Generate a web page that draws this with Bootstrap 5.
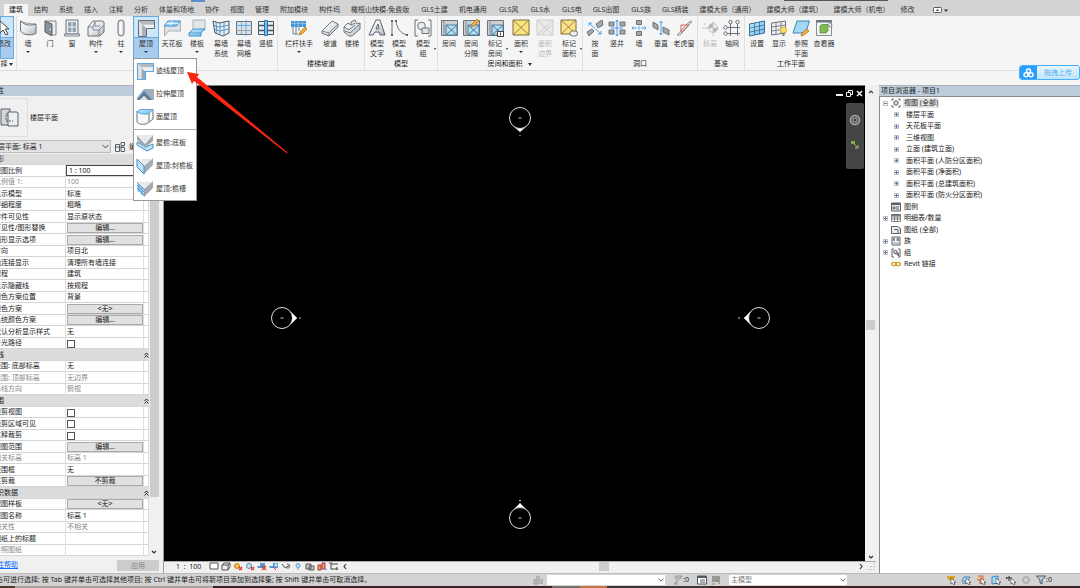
<!DOCTYPE html>
<html lang="zh-CN">
<head>
<meta charset="utf-8">
<meta name="viewport" content="width=device-width, initial-scale=1">
<title>项目1 - 楼层平面: 标高 1</title>
<link href="https://cdn.jsdelivr.net/npm/bootstrap@5.3.0/dist/css/bootstrap.min.css" rel="stylesheet">
<style>
body{font-family:"Noto Sans","Noto Sans CJK SC",sans-serif;font-size:7px;line-height:10px;color:#222;background:#f0f0f0}
button,input,select{font:inherit;color:inherit}
svg{display:block;flex:none}
.app{height:100vh;overflow:hidden}
/* tab strip */
.tabstrip{height:16px;background:#d3d3d3;padding:4px 0 0 4px;gap:1px}
.tabstrip .nav-link{padding:0 5px;height:12px;line-height:12px;color:#333;border:0;border-radius:0;white-space:nowrap}
.tabstrip .nav-link.gls{padding-left:6px}
.tabstrip .nav-link.active{background:#f5f5f5;color:#111}
.mark-blue{left:191px;width:14px;height:2px;background:#5b8fd0}
.mark-dark{left:784px;width:104px;height:1px;background:#555}
/* ribbon */
.ribbon{height:55px;background:#f5f5f5;border-bottom:1px solid #dcdcdc}
.panel{border-right:1px solid #e0e0e0;padding:0 1px}
.panel.flush{padding:0}
.panel.first{padding:0 2px 0 0}
.panel:last-child{border:0}
.panel-title{height:10px;line-height:10px;text-align:center;white-space:nowrap}
.tool{width:22px;height:43px;padding:3px 0 0;border:0;border-radius:0;background:none;display:flex;flex-direction:column;align-items:center;color:#333;line-height:10px;white-space:nowrap;position:relative}
.tool svg{width:18px;height:18px;margin-bottom:2px}
.tool.w24{width:24px}.tool.w26{width:26px}.tool.w40{width:40px}
.tool:disabled{color:#b5b5b5}
.drop::after{content:"";border:2px solid transparent;border-top-color:#333;border-bottom:0;margin-top:2px}
.sidedrop::after{content:"";position:absolute;right:0;top:32px;border:1px solid transparent;border-top:2px solid #333;border-bottom:0}
.tool.on{background:linear-gradient(#cde7f9 0 21px,#6aa9df 21px 22px,#a9cbee 22px);box-shadow:inset 0 0 0 1px #6aa9df}
.tool.half{width:14px;align-items:flex-end;padding-right:3px}
.caret{display:inline-block;border:2px solid transparent;border-top:3px solid #333;border-bottom:0;vertical-align:middle}
.optbar{height:14px;background:#f5f5f5}
.roofmenu{top:58px;left:133px;width:64px;border:1px solid #999;background:#fff;z-index:10}
.roofmenu button{display:flex;align-items:center;gap:2px;width:100%;height:23px;border:0;background:none;padding:0 0 0 2px;white-space:nowrap;color:#333}
.roofmenu svg{width:18px;height:18px}
.roofmenu hr{margin:1px 0;border-color:#aaa;opacity:1}
.pointer-arrow{left:186px;top:71px;z-index:12}
.upload{right:0;top:65px;height:15px;width:61px;border:1px solid #49aefb;border-radius:3px;padding:0;background:linear-gradient(#e8f6ff,#bfe5ff);color:#58b2f2;z-index:11;overflow:hidden}
.upload .ic{width:17px;height:15px;background:#2b9dfb}
/* properties palette */
.palette{width:164px;border-right:1px solid #999;background:#f0f0f0}
.palette-in{margin-left:-10px;min-height:0}
.capbar{height:11px;background:#becddb;line-height:10px;border-top:1px solid #aab4bd}
.typebox{height:43px;gap:2px}
.typebox .thumb{width:38px;height:39px;border:1px solid #ddd;padding:9px 0 0 9px}
.filter{height:15px}
.filter select{height:13px;width:121px;border:1px solid #bbb;border-radius:0;background-color:#e3e3e3;padding:0;font-size:7px;line-height:10px;background-size:7px;background-position:right 1px center}
.props{width:159px;table-layout:fixed;border-collapse:separate;border-spacing:0;background:#fff}
.props tr{height:12px}.props tr:nth-child(odd){height:11px}
.props td,.props th{padding:0 0 0 4px;line-height:10px;font-weight:400;border-right:1px solid #ddd;border-bottom:1px solid #d5d5d5;white-space:nowrap;overflow:hidden}
.props td{padding-left:1px}
.props .grp th,.props .grp td{background:#dcdcdc;border-right:0;padding-left:0}
.props .dim{color:#888}
.props td button{display:block;width:76px;height:10px;line-height:8px;padding:0;border:1px solid #aaa;border-radius:0;background:#e1e1e1;text-align:center}
.props input[type=checkbox]{appearance:none;display:block;width:8px;height:8px;border:1px solid #555;margin:1px 0 0;background:#fff}
.props input[type=text]{display:block;width:100%;height:11px;border:1px solid #444;padding:0 0 0 2px;background:#fff}
.props-wrap{height:402px;overflow:hidden;gap:1px}
.vbar{width:9px;background:#f0f0f0}
.vbar .fill{height:343px;background:#cdcdcd}
.palette .btn-apply{width:42px;height:11px;line-height:10px;padding:0;border:0;background:#ccc;color:#888}
/* drawing area */
.canvas{background:#000;position:relative;border-top:1px solid #777}
.marker{position:absolute;transform:translate(-50%,-50%)}
.winctl{top:3px;right:2px;gap:3px}
.winctl button,.bare{border:0;background:none;padding:0}
.navbox{top:17px;right:1px;width:18px;height:66px;background:#454545;border-radius:2px;padding-top:10px;gap:13px}
.vscroll{width:11px;background:#f0f0f0;padding:3px 0 0}
.thumbv{width:9px;height:10px;background:#cdcdcd}
.viewbar{height:12px;background:#f0f0f0;border-top:1px solid #aaa;line-height:9px}
.viewbar svg{width:10px;height:9px}
.thumbh{width:10px;height:9px;background:#cdcdcd}
/* project browser */
.browser{width:201px;margin-left:3px}
.tree{background:#fff;border-left:1px solid #888;border-top:1px solid #888;padding-left:3px}
.tree ul{list-style:none;margin:0;padding:0}
.tree .node{height:12px;display:flex;align-items:center;white-space:nowrap;gap:3px;color:#222}
.tree .node.s{height:11px}
.tree .kid{padding-left:11px}
.tree .kid .node{gap:0}
.tree .kid span{padding-left:7px}
.tree svg.ico{width:10px;height:10px}
.tree .hot{background:#e6e6e6;padding:0 1px;margin-left:-1px}
/* status bar */
.status{height:13px;background:#d3d3d3;border-top:1px solid #bbb;white-space:nowrap}
.status select{height:10px;font-size:7px;line-height:10px;width:118px;border:0;border-radius:0;padding:0 0 0 2px;background-color:#fff;background-size:6px;background-position:right 1px center;color:#777}
.status svg{width:10px;height:10px}
.hint{width:544px;margin-left:-11px}
.desk{height:2px;background:linear-gradient(90deg,#4a3a30 0 15px,#a9a3a0 15px 213px,#3a2323 213px 552px,#77706c 552px 580px,#c07848 580px 607px,#3a3434 607px 710px,#3a2326 710px)}
</style>
</head>
<body>
<svg width="0" height="0" class="position-absolute" aria-hidden="true">
<defs>
<linearGradient id="g1" x1="0" y1="0" x2="1" y2="1"><stop offset="0" stop-color="#fff"/><stop offset=".5" stop-color="#e6e9ec"/><stop offset="1" stop-color="#a9b0b8"/></linearGradient>
<linearGradient id="g2" x1="0" y1="0" x2="1" y2="1"><stop offset="0" stop-color="#c9e9fb"/><stop offset="1" stop-color="#6fbaea"/></linearGradient>
</defs>
<symbol id="wall" viewBox="0 0 18 18"><path d="M1.500 2l3 2.500c4 2 8 2 12.500.500v9.500c-4 1.800-8 1.700-12 .500l-3.500-3z" fill="url(#g1)" stroke="#6a727b"/><path d="M1.500 2c4 2.200 9 3 15.500 3" fill="none" stroke="#6a727b" stroke-width=".7"/></symbol>
<symbol id="door" viewBox="0 0 18 18"><path d="M4 2h11v14h-3" fill="#eef0f2" stroke="#7d858e"/><path d="M4 2l7 3v12l-7-4z" fill="#8a929b" stroke="#555d66"/><circle cx="9.300" cy="10.500" r=".8" fill="#fff"/></symbol>
<symbol id="window" viewBox="0 0 18 18"><path d="M3 1h12v14H3z" fill="#eef0f2" stroke="#6a727b"/><path d="M5 3h3.500v4.500H5zM9.500 3H13v4.500H9.500zM5 8.500h3.500V13H5zM9.500 8.500H13V13H9.500z" fill="#97a3b0"/><path d="M1.500 15h15v2h-15z" fill="#e2e5e8" stroke="#6a727b" stroke-width=".8"/></symbol>
<symbol id="comp" viewBox="0 0 18 18"><path d="M1 8l5-6h9l2 1v10l-4 4H1z" fill="url(#g1)" stroke="#6a727b"/><path d="M1 8h5l2-5M6 8v3h6v5M12 11l4-4M8 3v4h5" fill="none" stroke="#6a727b" stroke-width=".8"/></symbol>
<symbol id="column" viewBox="0 0 18 18"><rect x="6" y="1" width="6" height="16" rx="3" fill="#dfe2e6" stroke="#6a727b"/><rect x="7.500" y="3" width="2" height="12" rx="1" fill="#fff"/></symbol>
<symbol id="roof" viewBox="0 0 18 18"><path d="M1.500 1.500h16v8h-8v8h-8z" fill="#8b949e"/><path d="M1.500 1.500l4 4v12h-4z" fill="#dfe3e6"/><path d="M1.500 1.500h16v4h-12z" fill="#b3bac2"/><path d="M5.500 5.500l4 4v8h-4z" fill="#a8b0b8"/><path d="M5.500 5.500h12v4h-8z" fill="#f1f3f4"/><path d="M1.500 1.500h16v8h-8v8h-8z" fill="none" stroke="#68717b"/></symbol>
<symbol id="roofb" viewBox="0 0 18 18"><path d="M1.500 1.500l4 4v12h-4z" fill="#dfe3e6"/><path d="M1.500 1.500h16v4h-12z" fill="#b3bac2"/><path d="M5.500 5.500l4 4v8h-4z" fill="#a0a8b1"/><path d="M5.500 5.500h12v4h-8z" fill="#eff1f3"/><path d="M1.500 1.500h16v8h-8v8h-8z" fill="none" stroke="#5aa9e6" stroke-width="1.200"/></symbol>
<symbol id="ceiling" viewBox="0 0 18 18"><path d="M1.500 7v10l4-5h12V2" fill="#dfe3e7" stroke="#9aa1a9" stroke-width=".8"/><path d="M1 7l4-5h12.500l-4 5z" fill="url(#g2)" stroke="#3a90d4"/><path d="M3.500 4.500h12M9.500 2L7 7" stroke="#fff" stroke-width=".7"/></symbol>
<symbol id="floor" viewBox="0 0 18 18"><path d="M5 1h12v10H5z" fill="#e2e5e9" stroke="#9aa1a9" stroke-width=".8"/><path d="M1 14l4.500-4H17l-4 4v3H1z" fill="url(#g2)" stroke="#3a90d4"/><path d="M1 14h12" stroke="#3a90d4" stroke-width=".7"/></symbol>
<symbol id="curtain" viewBox="0 0 18 18"><path d="M1 2l6 2 10-2v12l-6 3-8-3z" fill="#e2f1fa" stroke="#49545f"/><path d="M4 3l1 12M8 4v12M12 3v13M1 6l6 2 10-2M2 10l6 2 9-2" fill="none" stroke="#3f7fb2" stroke-width=".8"/></symbol>
<symbol id="grid" viewBox="0 0 18 18"><path d="M1.500 2.500h15v13h-15z" fill="#dbe1e7" stroke="#6a727b"/><path d="M6.500 3v12M1.500 11.500h15" stroke="#8d969f" stroke-width=".8"/><path d="M11 1v16M1 6.500h16" stroke="#5aaaf0"/></symbol>
<symbol id="mullion" viewBox="0 0 18 18"><path d="M1.500 2.500h15v13h-15z" fill="#e2eef6" stroke="#49545f"/><path d="M1 6.500h16M1 11.500h16" stroke="#49545f" stroke-width="1.300"/><path d="M7.500 1.500h3v15h-3z" fill="#74bbea" stroke="#2c72aa"/></symbol>
<symbol id="rail" viewBox="0 0 18 18"><path d="M1 2h15v6H1z" fill="#4a97d6"/><path d="M1 4.500h15M4.500 2v6M8.500 2v6M12.500 2v6" stroke="#a8d0ef" stroke-width=".6"/><path d="M3 8v7M6 8v7M9 8v4M3 15h5" stroke="#6a7f92"/><path d="M9 16l1-3 5-5 2 2-5 5z" fill="#f6ae38" stroke="#9c6a1b" stroke-width=".7"/></symbol>
<symbol id="ramp" viewBox="0 0 18 18"><path d="M1 12L11 2l6 3v3l-9 9-7-3z" fill="url(#g1)" stroke="#6a727b"/><path d="M1 12l7 2 9-9M8 14v3" fill="none" stroke="#6a727b" stroke-width=".8"/></symbol>
<symbol id="stair" viewBox="0 0 18 18"><path d="M1 8l4-4 3 2V3l4-2 2 4 3-1v6l-8 7H6l-5-4z" fill="url(#g1)" stroke="#6a727b"/><path d="M1 8l5 3 6-5M2 12l5 2 9-8M8 6l4-2" fill="none" stroke="#6a727b"/></symbol>
<symbol id="mtext" viewBox="0 0 18 18"><path d="M1 16L8 1h4l5 15h-5l-1-3H7l-2 3zM8 10h3l-1-5z" fill="url(#g1)" stroke="#59616b" fill-rule="evenodd"/></symbol>
<symbol id="mline" viewBox="0 0 18 18"><path d="M2 2v14M6 2c1 7 4 12 11 14" fill="none" stroke="#6a727b"/><path d="M1 1h2v2H1zM1 15h2v2H1zM5 1h2v2H5zM16 15h2v2h-2z" fill="#59616b"/></symbol>
<symbol id="mgroup" viewBox="0 0 18 18"><path d="M4 1H1v16h3M14 1h3v16h-3" fill="none" stroke="#6a727b"/><circle cx="7.500" cy="7" r="3.800" fill="#eee" stroke="#6a727b"/><path d="M8 9h7v5.500H8z" fill="#dfe2e6" stroke="#6a727b"/></symbol>
<symbol id="room" viewBox="0 0 18 18"><path d="M1.500 1.500h16v15h-16z" fill="#ccd1d6" stroke="#6a727b"/><path d="M6 6h11v10H6z" fill="#b5def2" stroke="#4f7d9e"/><path d="M6 6l11 10M17 6L6 16" stroke="#406c8c" stroke-width=".9"/><path d="M4 1.500v15" stroke="#7d8791"/></symbol>
<symbol id="pencil" viewBox="0 0 18 18"><path d="M9 8l1-3 5-5 2 2-5 5z" fill="#f6ae38" stroke="#9c6a1b" stroke-width=".7"/></symbol>
<symbol id="area" viewBox="0 0 18 18"><path d="M1 1h16v15H1z" fill="#fde284" stroke="#7d6f3a"/><path d="M1 1l16 15M17 1L1 16" stroke="#7d6f3a" stroke-width=".8"/></symbol>
<symbol id="areab" viewBox="0 0 18 18"><path d="M1 1h16v15H1z" fill="#ebebeb" stroke="#cdcdcd"/><path d="M1 1l16 15M17 1L1 16M5 16L17 5" stroke="#c4c4c4" stroke-width=".8"/></symbol>
<symbol id="tagarea" viewBox="0 0 18 18"><path d="M1 1h15v14H1z" fill="#fde284" stroke="#7d6f3a"/><path d="M1 1l15 14M16 1L1 15" stroke="#7d6f3a" stroke-width=".8"/><rect x="10" y="12" width="7.500" height="5" rx="2.500" fill="#eee" stroke="#555" stroke-width=".8"/></symbol>
<symbol id="byface" viewBox="0 0 18 18"><path d="M1 13l5-3 2 2-5 5zM10 5l6-4 1 5-5 3z" fill="#a0a8b0" stroke="#6a727b"/><path d="M3 4l12 11M3 4l3 0M3 4v3M15 15h-3M15 15v-3" stroke="#4aa0f0"/></symbol>
<symbol id="shaft" viewBox="0 0 18 18"><path d="M1 3h5v4H1zM12 3h5v4h-5zM1 11h5v4H1zM12 11h5v4h-5z" fill="#a0a8b0" stroke="#6a727b"/><path d="M9 1v16M7.500 3L9 1l1.500 2M7.500 15L9 17l1.500-2M3 9h12" fill="none" stroke="#4aa0f0"/></symbol>
<symbol id="wopen" viewBox="0 0 18 18"><path d="M6.500 1.500h5v4h-5zM6.500 12.500h5v4h-5z" fill="#a0a8b0" stroke="#6a727b"/><path d="M2 9h5M11 9h5M3.500 7.500L2 9l1.500 1.500M14.500 7.500L16 9l-1.500 1.500M9 7v4" fill="none" stroke="#4aa0f0"/></symbol>
<symbol id="vert" viewBox="0 0 18 18"><path d="M1 3l5 3v5L1 8zM11 8l6 3v5l-6-3z" fill="#a0a8b0" stroke="#6a727b"/><path d="M9 2v14M7.500 4L9 2l1.500 2M7.500 14L9 16l1.500-2" fill="none" stroke="#4aa0f0"/></symbol>
<symbol id="dormer" viewBox="0 0 18 18"><path d="M2 16L14 3l3-1-2 3L5 16z" fill="#d9dde1" stroke="#7d858e" stroke-width=".8"/><path d="M6 13V6h8L6 14" fill="none" stroke="#dd5a4c"/></symbol>
<symbol id="level" viewBox="0 0 18 18"><path d="M1 9h6M2 5h3" stroke="#c9c9c9"/><circle cx="12" cy="9" r="4.500" fill="#f3f3f3" stroke="#c4c4c4"/><path d="M12 4.500V9H7.500A4.500 4.500 0 0 1 12 4.500zM12 9h4.500A4.500 4.500 0 0 1 12 13.500z" fill="#b5b5b5"/><path d="M12 2v15M6 9h12" stroke="#c4c4c4" stroke-width=".8"/></symbol>
<symbol id="axis" viewBox="0 0 18 18"><path d="M7.500 5v12M14.500 5v12M4 8.500h13M4 14.500h13" stroke="#6a727b"/><g fill="#fff" stroke="#59616b" stroke-width=".9"><circle cx="7.500" cy="3" r="1.700"/><circle cx="14.500" cy="3" r="1.700"/><circle cx="2.500" cy="8.500" r="1.700"/><circle cx="2.500" cy="14.500" r="1.700"/></g></symbol>
<symbol id="wset" viewBox="0 0 18 18"><path d="M1.500 5l5-1 10-2v12l-10 2-5 1z" fill="url(#g2)" stroke="#336f9f"/><path d="M6.500 4v12M11.500 3v12M2 9l14-3M2 13l14-3" stroke="#336f9f" stroke-width=".8"/></symbol>
<symbol id="wshow" viewBox="0 0 18 18"><path d="M1.500 4l14-2v12l-14 2z" fill="#eceef0" stroke="#6a727b"/><path d="M6 3v12M11 3v12M1.500 8l14-2M1.500 12l14-2" stroke="#6a727b" stroke-width=".8"/><circle cx="13.500" cy="11" r="3" fill="#ffe061" stroke="#d3a324" stroke-width=".7"/><path d="M12.500 14h2v3h-2z" fill="#777"/></symbol>
<symbol id="refp" viewBox="0 0 18 18"><path d="M5 2h12.500l-4 12H1z" fill="#a3d8f3" stroke="#3f85b6"/><path d="M9 17l1-3 5-4 2 2-5 4z" fill="#f6ae38" stroke="#9c6a1b" stroke-width=".7"/></symbol>
<symbol id="viewer" viewBox="0 0 18 18"><path d="M1.500 1.500h15v15h-15z" fill="#f3f5f6" stroke="#868e96"/><path d="M1 1h16v2.500H1z" fill="#6f777f"/><path d="M5 7l2-1.500h6V12l-2 2H5z" fill="#7dbb55" stroke="#4d8530" stroke-width=".7"/><path d="M14 3v5l1-1 1 2 1-.5-1-2h1.500z" fill="#fff" stroke="#555" stroke-width=".5"/></symbol>
<symbol id="extr" viewBox="0 0 18 18"><path d="M8 4h10v11h-4z" fill="#a5adb5"/><path d="M1 15l7-10 8 10h-4l-4-4-4 4z" fill="#6d767f"/><path d="M1 14l7-9 8 9" fill="none" stroke="#74b4ea" stroke-width="1.400"/><path d="M4 15l4-4 4 4z" fill="#dfe3e6"/></symbol>
<symbol id="face" viewBox="0 0 18 18"><path d="M1 3v11c3 3 7 3 11 1l5-4V2" fill="#f7f8f9" stroke="#6a727b"/><path d="M1 3.500l4-2h12l-4 4c-4 1-8 1-12-2z" fill="url(#g2)" stroke="#3a90d4" stroke-width=".8"/><path d="M13 5.500V14" stroke="#6a727b"/></symbol>
<symbol id="soffit" viewBox="0 0 18 18"><path d="M1 8l9 5 7-3v4l-6 3-10-6z" fill="#bfe3f8" stroke="#3f90ca"/><path d="M1 1l8 9 8-9v6l-8 7-8-8z" fill="#9fa7af"/><path d="M2 1h14l-7 8z" fill="#e6e8eb"/></symbol>
<symbol id="fascia" viewBox="0 0 18 18"><path d="M8 9l9-8v7l-9 9z" fill="#a2aab2"/><path d="M3 2h13L8 9z" fill="#e6e8eb"/><path d="M1 2l7 7v8l-7-7z" fill="#bfe3f8" stroke="#3f90ca"/></symbol>
<symbol id="gutter" viewBox="0 0 18 18"><path d="M8 9l9-8v7l-9 9z" fill="#a2aab2"/><path d="M3 2h13L8 9z" fill="#e6e8eb"/><path d="M1 2l7 7v8l-7-7z" fill="#a9d8f4"/><path d="M1 2l8 8M1 5l8 8M1 8l8 8M3 4v8M6 7v8" stroke="#4a8fc4" stroke-width=".8"/></symbol>
<symbol id="plus" viewBox="0 0 5 5"><path d="M.5.5h4v4h-4z" fill="#fff" stroke="#aaa" stroke-width=".8"/><path d="M1 2.500h3M2.500 1v3" stroke="#3d5a9c" stroke-width=".8"/></symbol>
<symbol id="minus" viewBox="0 0 5 5"><path d="M.5.5h4v4h-4z" fill="#fff" stroke="#aaa" stroke-width=".8"/><path d="M1 2.500h3" stroke="#3d5a9c" stroke-width=".8"/></symbol>
<symbol id="cursor" viewBox="0 0 10 10"><path d="M5 3v6l1.500-1L8 10l1-.5L8 7.500h2z" fill="#fff" stroke="#333" stroke-width=".6"/></symbol>
</svg>

<div class="app d-flex flex-column position-relative">
<nav class="tabstrip nav flex-nowrap position-relative" aria-label="功能区选项卡">
<span class="mark-blue position-absolute top-0"></span><span class="mark-dark position-absolute top-0"></span>
<a class="nav-link active" href="#">建筑</a><a class="nav-link" href="#">结构</a><a class="nav-link" href="#">系统</a><a class="nav-link" href="#">插入</a><a class="nav-link" href="#">注释</a><a class="nav-link" href="#">分析</a><a class="nav-link" href="#">体量和场地</a><a class="nav-link" href="#">协作</a><a class="nav-link" href="#">视图</a><a class="nav-link" href="#">管理</a><a class="nav-link" href="#">附加模块</a><a class="nav-link" href="#">构件坞</a><a class="nav-link" href="#">橄榄山快模-免费版</a><a class="nav-link gls" href="#">GLS土建</a><a class="nav-link" href="#">机电通用</a><a class="nav-link gls" href="#">GLS风</a><a class="nav-link gls" href="#">GLS水</a><a class="nav-link gls" href="#">GLS电</a><a class="nav-link" href="#">GLS出图</a><a class="nav-link gls" href="#">GLS族</a><a class="nav-link" href="#">GLS精装</a><a class="nav-link" href="#">建模大师（通用）</a><a class="nav-link" href="#">建模大师（建筑）</a><a class="nav-link" href="#">建模大师（机电）</a><a class="nav-link" href="#">修改</a>
<button class="bare ms-2 ps-1" aria-label="最小化功能区"><svg width="16" height="8" viewBox="0 0 16 8"><rect x=".5" y="1.500" width="8" height="5" rx="1" fill="#fff" stroke="#555"/><path d="M3 5l1.500-2L6 5z" fill="#333"/><path d="M11 3.500h4L13 6z" fill="#333"/></svg></button>
</nav>

<div class="ribbon d-flex">
<section class="panel first"><button class="tool half on mt-0"><svg viewBox="0 0 18 18"><path d="M7 2v12l3-3 3 5 2-1-3-5h4z" fill="#fff" stroke="#444"/></svg>修改</button><div class="panel-title">择 <i class="caret"></i></div></section>
<section class="panel flush"><div class="d-flex">
<button class="tool drop"><svg><use href="#wall"/></svg>墙</button>
<button class="tool"><svg><use href="#door"/></svg>门</button>
<button class="tool"><svg><use href="#window"/></svg>窗</button>
<button class="tool w26 drop"><svg><use href="#comp"/></svg>构件</button>
<button class="tool w24 drop"><svg><use href="#column"/></svg>柱</button>
<button class="tool w26 drop on" aria-expanded="true"><svg><use href="#roof"/></svg>屋顶</button>
<button class="tool w26"><svg><use href="#ceiling"/></svg>天花板</button>
<button class="tool w24 drop"><svg><use href="#floor"/></svg>楼板</button>
<button class="tool w24"><svg><use href="#curtain"/></svg>幕墙<br>系统</button>
<button class="tool"><svg><use href="#grid"/></svg>幕墙<br>网格</button>
<button class="tool"><svg><use href="#mullion"/></svg>竖梃</button>
</div></section>
<section class="panel"><div class="d-flex">
<button class="tool w40 drop"><svg><use href="#rail"/></svg>栏杆扶手</button>
<button class="tool"><svg><use href="#ramp"/></svg>坡道</button>
<button class="tool"><svg><use href="#stair"/></svg>楼梯</button>
</div><div class="panel-title">楼梯坡道</div></section>
<section class="panel"><div class="d-flex">
<button class="tool"><svg><use href="#mtext"/></svg>模型<br>文字</button>
<button class="tool"><svg><use href="#mline"/></svg>模型<br>线</button>
<button class="tool w26 sidedrop"><svg><use href="#mgroup"/></svg>模型<br>组</button>
</div><div class="panel-title">模型</div></section>
<section class="panel flush"><div class="d-flex">
<button class="tool"><svg><use href="#room"/></svg>房间</button>
<button class="tool"><svg><use href="#room"/><use href="#pencil"/></svg>房间<br>分隔</button>
<button class="tool w26 sidedrop"><svg><use href="#room"/><rect x="11.500" y="12.500" width="6" height="5" fill="#fff" stroke="#444"/><path d="M14.500 13.500v3" stroke="#444"/></svg>标记<br>房间</button>
<button class="tool w26 drop"><svg><use href="#area"/></svg>面积</button>
<button class="tool" disabled><svg><use href="#areab"/></svg>面积<br>边界</button>
<button class="tool w26 sidedrop"><svg><use href="#tagarea"/></svg>标记<br>面积</button>
</div><div class="panel-title">房间和面积 <i class="caret ms-1"></i></div></section>
<section class="panel"><div class="d-flex">
<button class="tool"><svg><use href="#byface"/></svg>按<br>面</button>
<button class="tool"><svg><use href="#shaft"/></svg>竖井</button>
<button class="tool"><svg><use href="#wopen"/></svg>墙</button>
<button class="tool"><svg><use href="#vert"/></svg>垂直</button>
<button class="tool w24"><svg><use href="#dormer"/></svg>老虎窗</button>
</div><div class="panel-title">洞口</div></section>
<section class="panel"><div class="d-flex">
<button class="tool" disabled><svg><use href="#level"/></svg>标高</button>
<button class="tool"><svg><use href="#axis"/></svg>轴网</button>
</div><div class="panel-title">基准</div></section>
<section class="panel"><div class="d-flex">
<button class="tool"><svg><use href="#wset"/></svg>设置</button>
<button class="tool"><svg><use href="#wshow"/></svg>显示</button>
<button class="tool"><svg><use href="#refp"/></svg>参照<br>平面</button>
<button class="tool w24"><svg><use href="#viewer"/></svg>查看器</button>
</div><div class="panel-title">工作平面</div></section>
</div>
<div class="optbar"></div>

<div class="roofmenu position-absolute" role="menu">
<button role="menuitem"><svg><use href="#roofb"/></svg>迹线屋顶</button>
<button role="menuitem"><svg><use href="#extr"/></svg>拉伸屋顶</button>
<button role="menuitem"><svg><use href="#face"/></svg>面屋顶</button>
<hr>
<button role="menuitem"><svg><use href="#soffit"/></svg>屋檐:底板</button>
<button role="menuitem"><svg><use href="#fascia"/></svg>屋顶:封檐板</button>
<button role="menuitem"><svg><use href="#gutter"/></svg>屋顶:檐槽</button>
</div>
<svg class="pointer-arrow position-absolute" width="102" height="84" viewBox="0 0 102 84"><path d="M1 1l12 2-2 3 90.500 75.500-.5 1L8 10l-2 3z" fill="#fb2412"/></svg>
<button class="upload position-absolute d-flex align-items-center"><span class="ic d-flex align-items-center justify-content-center"><svg width="11" height="10" viewBox="0 0 11 10" fill="none" stroke="#fff" stroke-width="1.500"><circle cx="5.500" cy="3" r="2"/><circle cx="3" cy="6.800" r="2"/><circle cx="8" cy="6.800" r="2"/></svg></span><span class="flex-fill">拖拽上传</span></button>

<main class="d-flex flex-grow-1" style="min-height:0">
<aside class="palette flex-shrink-0 overflow-hidden">
<div class="palette-in">
<div class="capbar">属性</div>
<div class="typebox d-flex align-items-center">
<div class="thumb"><svg width="20" height="20" viewBox="0 0 20 20"><path d="M1 1h9v16H1z" fill="#d4d7da" stroke="#59616b"/><path d="M8 4h9l1 1v13H8z" fill="#eceff1" stroke="#59616b"/><path d="M8 6H6v7h7" fill="none" stroke="#59616b" stroke-dasharray="2 1"/></svg></div><span>楼层平面</span></div>
<div class="filter d-flex align-items-center"><select class="form-select" aria-label="属性过滤器"><option>楼层平面: 标高 1</option></select><button class="bare d-flex align-items-center ms-1 gap-1"><svg width="10" height="10" viewBox="0 0 10 10" fill="none" stroke="#59616b"><path d="M.5 2.500h4v7h-4zM6 .5h3.500v3H6zM6 5.500h3.500v4H6zM1 5h8"/></svg>编辑类型</button></div>
<div class="props-wrap d-flex">
<table class="props">
<colgroup><col style="width:76px"><col style="width:78px"><col style="width:5px"></colgroup>
<tbody>
<tr class="grp"><th colspan="2">图形</th><td></td></tr>
<tr><th>视图比例</th><td class="p-0" colspan="2"><input type="text" value="1 : 100" aria-label="视图比例"></td></tr>
<tr class="dim"><th>比例值 1:</th><td>100</td><td></td></tr>
<tr><th>显示模型</th><td>标准</td><td></td></tr>
<tr><th>详细程度</th><td>粗略</td><td></td></tr>
<tr><th>零件可见性</th><td>显示原状态</td><td></td></tr>
<tr><th>可见性/图形替换</th><td><button>编辑...</button></td><td></td></tr>
<tr><th>图形显示选项</th><td><button>编辑...</button></td><td></td></tr>
<tr><th>方向</th><td>项目北</td><td></td></tr>
<tr><th>墙连接显示</th><td>清理所有墙连接</td><td></td></tr>
<tr><th>规程</th><td>建筑</td><td></td></tr>
<tr><th>显示隐藏线</th><td>按规程</td><td></td></tr>
<tr><th>颜色方案位置</th><td>背景</td><td></td></tr>
<tr><th>颜色方案</th><td><button>&lt;无&gt;</button></td><td></td></tr>
<tr><th>系统颜色方案</th><td><button>编辑...</button></td><td></td></tr>
<tr><th>默认分析显示样式</th><td>无</td><td></td></tr>
<tr><th><label for="sun">日光路径</label></th><td><input type="checkbox" id="sun"></td><td></td></tr>
<tr class="grp"><th colspan="2">基线</th><td><svg width="5" height="6" viewBox="0 0 5 6" fill="none" stroke="#222"><path d="M.5 3l2-2 2 2M.5 5.500l2-2 2 2"/></svg></td></tr>
<tr><th>范围: 底部标高</th><td>无</td><td></td></tr>
<tr class="dim"><th>范围: 顶部标高</th><td>无边界</td><td></td></tr>
<tr class="dim"><th>基线方向</th><td>俯视</td><td></td></tr>
<tr class="grp"><th colspan="2">范围</th><td><svg width="5" height="6" viewBox="0 0 5 6" fill="none" stroke="#222"><path d="M.5 3l2-2 2 2M.5 5.500l2-2 2 2"/></svg></td></tr>
<tr><th><label for="crop">裁剪视图</label></th><td><input type="checkbox" id="crop"></td><td></td></tr>
<tr><th><label for="cropv">裁剪区域可见</label></th><td><input type="checkbox" id="cropv"></td><td></td></tr>
<tr><th><label for="anno">注释裁剪</label></th><td><input type="checkbox" id="anno"></td><td></td></tr>
<tr><th>视图范围</th><td><button>编辑...</button></td><td></td></tr>
<tr class="dim"><th>相关标高</th><td>标高 1</td><td></td></tr>
<tr><th>范围框</th><td>无</td><td></td></tr>
<tr><th>柱剪裁</th><td><button>不剪裁</button></td><td></td></tr>
<tr class="grp"><th colspan="2">标识数据</th><td><svg width="5" height="6" viewBox="0 0 5 6" fill="none" stroke="#222"><path d="M.5 3l2-2 2 2M.5 5.500l2-2 2 2"/></svg></td></tr>
<tr><th>视图样板</th><td><button>&lt;无&gt;</button></td><td></td></tr>
<tr><th>视图名称</th><td>标高 1</td><td></td></tr>
<tr class="dim"><th>相关性</th><td>不相关</td><td></td></tr>
<tr><th>图纸上的标题</th><td></td><td></td></tr>
<tr class="dim"><th>参照图纸</th><td></td><td></td></tr>
</tbody></table>
<div class="vbar d-flex flex-column justify-content-between"><div class="fill"></div><svg width="8" height="8" viewBox="0 0 8 8"><path d="M2 3l2 2 2-2" fill="none" stroke="#333" stroke-width="1.200"/></svg></div>
</div>
<div class="d-flex justify-content-between pt-1 pe-1"><a href="#">属性帮助</a><button class="btn-apply" disabled>应用</button></div>
</div>
</aside>

<section class="d-flex flex-column flex-grow-1" style="min-width:0">
<div class="d-flex flex-grow-1">
<div class="canvas flex-grow-1">
<svg class="marker" style="left:50.800%;top:6.900%" width="24" height="34" viewBox="-12 -16 24 34"><circle r="10.500" fill="#000" stroke="#ddd"/><path d="M-6.500 8.500L0 14 6.500 8.500A10.500 10.500 0 0 1-6.500 8.500z" fill="#fff"/><path d="M-1.500 0h3M-1 18h2" stroke="#ccc"/></svg>
<svg class="marker" style="left:17.100%;top:48.800%" width="38" height="24" viewBox="-17 -12 38 24"><path d="M7-7.500L15 0 7 7.500z" fill="#fff"/><circle r="10.500" fill="#000" stroke="#ddd"/><path d="M8.500-6.500L15 0 8.500 6.500A10.500 10.500 0 0 0 8.500-6.500z" fill="#fff"/><path d="M-1.500 0h3M17 0h2" stroke="#ccc"/></svg>
<svg class="marker" style="left:84.600%;top:48.800%" width="38" height="24" viewBox="-21 -12 38 24"><path d="M-7-7.500L-15 0-7 7.500z" fill="#fff"/><circle r="10.500" fill="#000" stroke="#ddd"/><path d="M-8.500-6.500L-15 0-8.500 6.500A10.500 10.500 0 0 1-8.500-6.500z" fill="#fff"/><path d="M-1.500 0h3M-19 0h-2" stroke="#ccc"/></svg>
<svg class="marker" style="left:50.800%;top:90.400%" width="24" height="34" viewBox="-12 -20 24 34"><circle r="10.500" fill="#000" stroke="#ddd"/><path d="M-6.500-8.500L0-15 6.500-8.500A10.500 10.500 0 0 0-6.500-8.500z" fill="#fff"/><path d="M-1.500 0h3M-1-17.500h2" stroke="#ccc"/></svg>
<div class="winctl position-absolute d-flex"><button aria-label="最小化"><svg width="7" height="9" viewBox="0 0 7 9"><path d="M0 6h7" stroke="#eee" stroke-width="2"/></svg></button><button aria-label="还原"><svg width="7" height="9" viewBox="0 0 7 9" fill="none" stroke="#eee"><path d="M2.500 3.500v-2h4v4h-2M.5 3.500h4v4h-4z"/></svg></button><button aria-label="关闭"><svg width="7" height="9" viewBox="0 0 7 9"><path d="M1 2l5 5M6 2L1 7" stroke="#eee" stroke-width="1.600"/></svg></button></div>
<div class="navbox position-absolute d-flex flex-column align-items-center"><svg width="12" height="14" viewBox="0 0 12 14"><circle cx="6" cy="7" r="4.500" fill="none" stroke="#a9adb1" stroke-width="1.500"/><path d="M4 5h4v4H4z" fill="none" stroke="#a9adb1"/></svg><svg width="10" height="10" viewBox="0 0 10 10"><path d="M1 1h4v3H1z" fill="#7fa84f"/><path d="M4 4l4 4M8 5v3H5" fill="none" stroke="#9bc26b"/></svg></div>
</div>
<div class="vscroll d-flex flex-column justify-content-between align-items-center"><svg width="8" height="8" viewBox="0 0 8 8"><path d="M2 5l2-2 2 2" fill="none" stroke="#444" stroke-width="1.200"/></svg><div class="thumbv"></div><svg width="8" height="8" viewBox="0 0 8 8"><path d="M2 3l2 2 2-2" fill="none" stroke="#333" stroke-width="1.200"/></svg></div>
</div>
<div class="viewbar d-flex align-items-start">
<span class="ps-2 ms-1 me-2">1&nbsp; :&nbsp; 100</span>
<div class="d-flex ps-0" style="gap:2px">
<svg viewBox="0 0 10 9"><path d="M1 1h8v6H1z" fill="#fff" stroke="#555"/></svg>
<svg viewBox="0 0 10 9"><path d="M1 3l2-2h6v4L7 8H1zM1 3h6v5M7 3l2-2" fill="#eee" stroke="#555"/></svg>
<svg viewBox="0 0 10 9"><circle cx="4" cy="4" r="2.500" fill="#fbc14a" stroke="#c97f16"/><path d="M6 5l3 3M9 5L6 8" stroke="#d33" stroke-width="1.200"/></svg>
<svg viewBox="0 0 10 9"><circle cx="4" cy="4" r="2.500" fill="#cfe4f5" stroke="#5588ae"/><path d="M6 5l3 3M9 5L6 8" stroke="#d33" stroke-width="1.200"/></svg>
<svg viewBox="0 0 10 9"><path d="M0 4h3V1h5v5H1z" fill="#5598d0"/><path d="M5 4l4 4M9 4L5 8" stroke="#d33" stroke-width="1.200"/></svg>
<svg viewBox="0 0 10 9"><path d="M0 4h4V1h5v5H1z" fill="#5598d0"/><circle cx="7" cy="3" r="1.500" fill="#cfe4f5"/><path d="M4 5l3 3" stroke="#d33"/></svg>
<svg viewBox="0 0 10 9"><path d="M1 2l3 4 5-3M6 2c4 0 3 5 0 4" fill="none" stroke="#555"/></svg>
<svg viewBox="0 0 10 9"><circle cx="5" cy="3.500" r="2" fill="#bfe2fa" stroke="#4a9bdc"/><path d="M5 6v2" stroke="#4a9bdc"/></svg>
<svg viewBox="0 0 10 9"><path d="M1 2h5v5H1zM4 4h5v4H4z" fill="#ccc" stroke="#555"/></svg>
<svg viewBox="0 0 10 9"><path d="M1 3h3v5H1zM5 1h3v6H5z" fill="#f2a05c" stroke="#a34"/><path d="M7 6l3 2" stroke="#48c"/></svg>
<svg viewBox="0 0 10 9"><path d="M2 2h7M2 7h7M2 2v5M0 1h3M8 5v3" fill="none" stroke="#444"/></svg>
<svg viewBox="0 0 10 9"><path d="M5 2L3 4.500 5 7" fill="none" stroke="#333" stroke-width="1.200"/></svg>
</div>
<div class="flex-grow-1 d-flex justify-content-center"><div class="thumbh"></div></div>
<svg viewBox="0 0 10 9"><path d="M4 2l2 2.500L4 7" fill="none" stroke="#333" stroke-width="1.200"/></svg><svg viewBox="0 0 10 9"><path d="M8 1v1M8 4v1M8 7v1M5 4v1M5 7v1M2 7v1" stroke="#bbb" stroke-width="1.500"/></svg>
</div>
</section>

<aside class="browser d-flex flex-column flex-shrink-0">
<div class="capbar" style="padding-left:2px">项目浏览器 - 项目1</div>
<div class="tree flex-grow-1">
<ul>
<li><div class="node"><svg width="5" height="5"><use href="#minus"/></svg><svg class="ico" viewBox="0 0 10 10"><path d="M1 3V1h2M7 1h2v2M9 7v2H7M3 9H1V7" fill="none" stroke="#666"/><circle cx="5" cy="5" r="2.200" fill="#ddd" stroke="#555"/></svg><span class="hot">视图 (全部)</span></div>
<ul class="kid">
<li class="node s"><svg width="5" height="5"><use href="#plus"/></svg><span>楼层平面</span></li>
<li class="node"><svg width="5" height="5"><use href="#plus"/></svg><span>天花板平面</span></li>
<li class="node s"><svg width="5" height="5"><use href="#plus"/></svg><span>三维视图</span></li>
<li class="node"><svg width="5" height="5"><use href="#plus"/></svg><span>立面 (建筑立面)</span></li>
<li class="node s"><svg width="5" height="5"><use href="#plus"/></svg><span>面积平面 (人防分区面积)</span></li>
<li class="node"><svg width="5" height="5"><use href="#plus"/></svg><span>面积平面 (净面积)</span></li>
<li class="node s"><svg width="5" height="5"><use href="#plus"/></svg><span>面积平面 (总建筑面积)</span></li>
<li class="node"><svg width="5" height="5"><use href="#plus"/></svg><span>面积平面 (防火分区面积)</span></li>
</ul></li>
<li class="node s"><svg width="5" height="5"></svg><svg class="ico" viewBox="0 0 10 10"><path d="M.5 1h9v8h-9z" fill="#e6e9ec" stroke="#59616b"/><path d="M1 2h8" stroke="#59616b" stroke-width="2"/><path d="M2 5h2v2H2zM5 5h3M5 7h3" stroke="#59616b" fill="none"/></svg>图例</li>
<li class="node"><svg width="5" height="5"><use href="#plus"/></svg><svg class="ico" viewBox="0 0 10 10"><path d="M.5 1.500h9v7h-9zM.5 4h9M.5 6h9M3.500 2v6M6.500 2v6" fill="#fff" stroke="#666" stroke-width=".8"/><path d="M.5 2h9" stroke="#59616b" stroke-width="1.500"/></svg>明细表/数量</li>
<li class="node s"><svg width="5" height="5"></svg><svg class="ico" viewBox="0 0 10 10"><path d="M.5 1.500h6l3 2v5h-9zM3 4.500h4v4" fill="#eee" stroke="#59616b"/></svg>图纸 (全部)</li>
<li class="node"><svg width="5" height="5"><use href="#plus"/></svg><svg class="ico" viewBox="0 0 10 10"><path d="M1 1h8v8H1z" fill="#fff" stroke="#59616b"/><path d="M2 2h2v3H2zM5.500 2h2.500v3H5.500zM2 6.500h6v1H2z" fill="#7d8791"/></svg>族</li>
<li class="node s"><svg width="5" height="5"><use href="#plus"/></svg><svg class="ico" viewBox="0 0 10 10"><path d="M3 1H1v8h2M7 1h2v8H7" fill="none" stroke="#59616b"/><circle cx="4.500" cy="4" r="1.800" fill="#ddd" stroke="#666"/><path d="M4.500 5h3v3z" fill="#aaa" stroke="#666"/></svg>组</li>
<li class="node"><svg width="5" height="5"></svg><svg class="ico" viewBox="0 0 10 10" fill="none" stroke="#d9a01e" stroke-width="1.400"><ellipse cx="3" cy="5" rx="2.300" ry="1.600"/><ellipse cx="7" cy="5" rx="2.300" ry="1.600"/></svg>Revit 链接</li>
</ul>
</div>
</aside>
</main>

<footer class="status d-flex align-items-center flex-shrink-0">
<span class="hint">单击可进行选择; 按 Tab 键并单击可选择其他项目; 按 Ctrl 键并单击可将新项目添加到选择集; 按 Shift 键并单击可取消选择。</span>
<svg viewBox="0 0 10 10" fill="none" stroke="#999"><circle cx="5" cy="2.500" r="1.500"/><path d="M1 5h4v4H1zM7 4v5M9 4v5M3 5v4"/></svg>
<select class="form-select ms-1" aria-label="工作集"><option></option></select>
<svg class="ms-2" viewBox="0 0 10 10"><path d="M2 1h7L7 4H3zM5 5L1 9h4" fill="#bbb" stroke="#999"/></svg><span>:0</span>
<svg class="ms-2 me-1 ps-0" viewBox="0 0 10 10"><path d="M.5 1h9v8h-9z" fill="#fff" stroke="#4e5a66"/><path d="M.5 2h9" stroke="#4e5a66" stroke-width="2"/><path d="M3 5h5M3 7h5" stroke="#4e5a66"/></svg>
<svg viewBox="0 0 10 10"><path d="M1 1h8v6H1z" fill="#999"/><path d="M5 5l4 4M1 9h3" stroke="#888"/></svg>
<select class="form-select ms-2" aria-label="设计选项"><option>主模型</option></select>
<div class="d-flex align-items-center ms-auto pe-4 me-1" style="gap:5px">
<svg viewBox="0 0 10 10"><path d="M1 2h8M2 4h6" stroke="#dca41e" stroke-width="2"/><use href="#cursor"/></svg>
<svg viewBox="0 0 10 10"><path d="M1 6l2-4h6L7 6zM1 8h5" fill="#cfe8fa" stroke="#3a86c4"/><use href="#cursor"/></svg>
<svg viewBox="0 0 10 10"><path d="M2 1h5v4H1M4 5v4" fill="#f6b98a" stroke="#d2692b"/><use href="#cursor"/></svg>
<svg viewBox="0 0 10 10"><path d="M1 2l6-1v7L1 9z" fill="#a9dcf5" stroke="#3a86c4"/><use href="#cursor"/></svg>
<svg viewBox="0 0 10 10"><path d="M0 3h6M3 1v5M1 2L0 3l1 1" stroke="#333" fill="none"/><use href="#cursor"/></svg>
<svg viewBox="0 0 10 10"><circle cx="5" cy="5" r="3" fill="none" stroke="#aaa" stroke-width="2" stroke-dasharray="2 .5"/></svg>
<div class="d-flex"><svg viewBox="0 0 10 10"><path d="M.5 1h9L6 5v4L4 8V5z" fill="#c3cfda" stroke="#4e5a66"/></svg>:0</div>
</div>
</footer>
<div class="desk flex-shrink-0"></div>
</div>
<script src="https://cdn.jsdelivr.net/npm/bootstrap@5.3.0/dist/js/bootstrap.bundle.min.js"></script>
</body>
</html>
